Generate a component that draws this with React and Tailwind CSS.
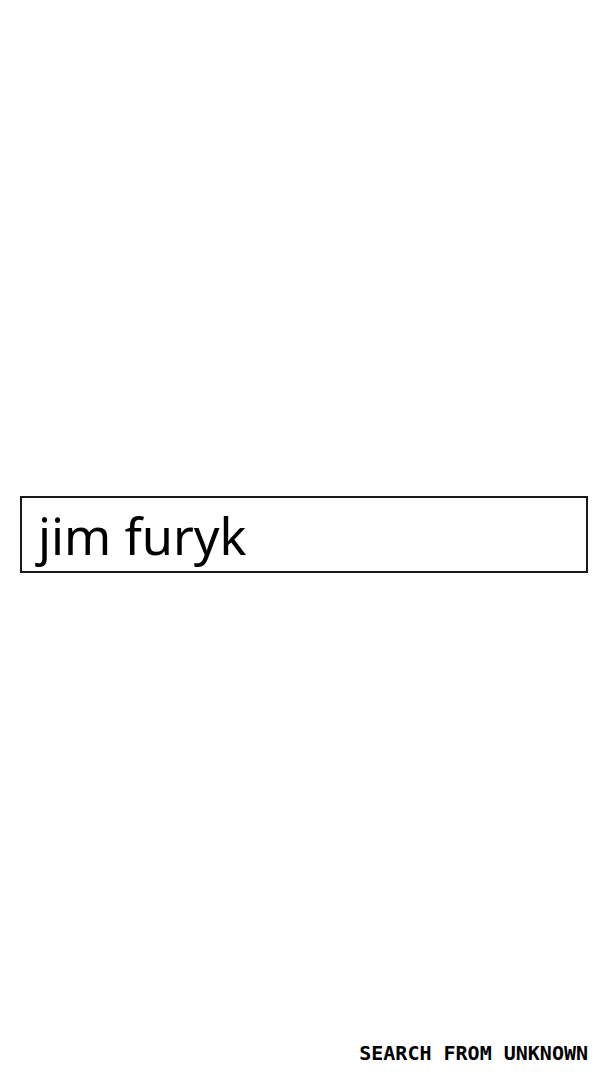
import React from 'react';

export default function App() {
    return (
        <div className="h-screen flex flex-col bg-white px-5">
            <div className="mt-[496px] h-[77px] border-2 border-[#1a1a1a] flex items-center pl-4">
                <span
                    className="text-[50.5px] leading-none text-black pt-[3px]"
                    style={{ fontFamily: '"Noto Sans", sans-serif' }}
                >
                    jim furyk
                </span>
            </div>
            <div className="mt-auto pb-3 flex justify-end">
                <span
                    className="text-[20px] font-bold text-black"
                    style={{ fontFamily: '"DejaVu Sans Mono", monospace' }}
                >
                    SEARCH FROM UNKNOWN
                </span>
            </div>
        </div>
    );
}
